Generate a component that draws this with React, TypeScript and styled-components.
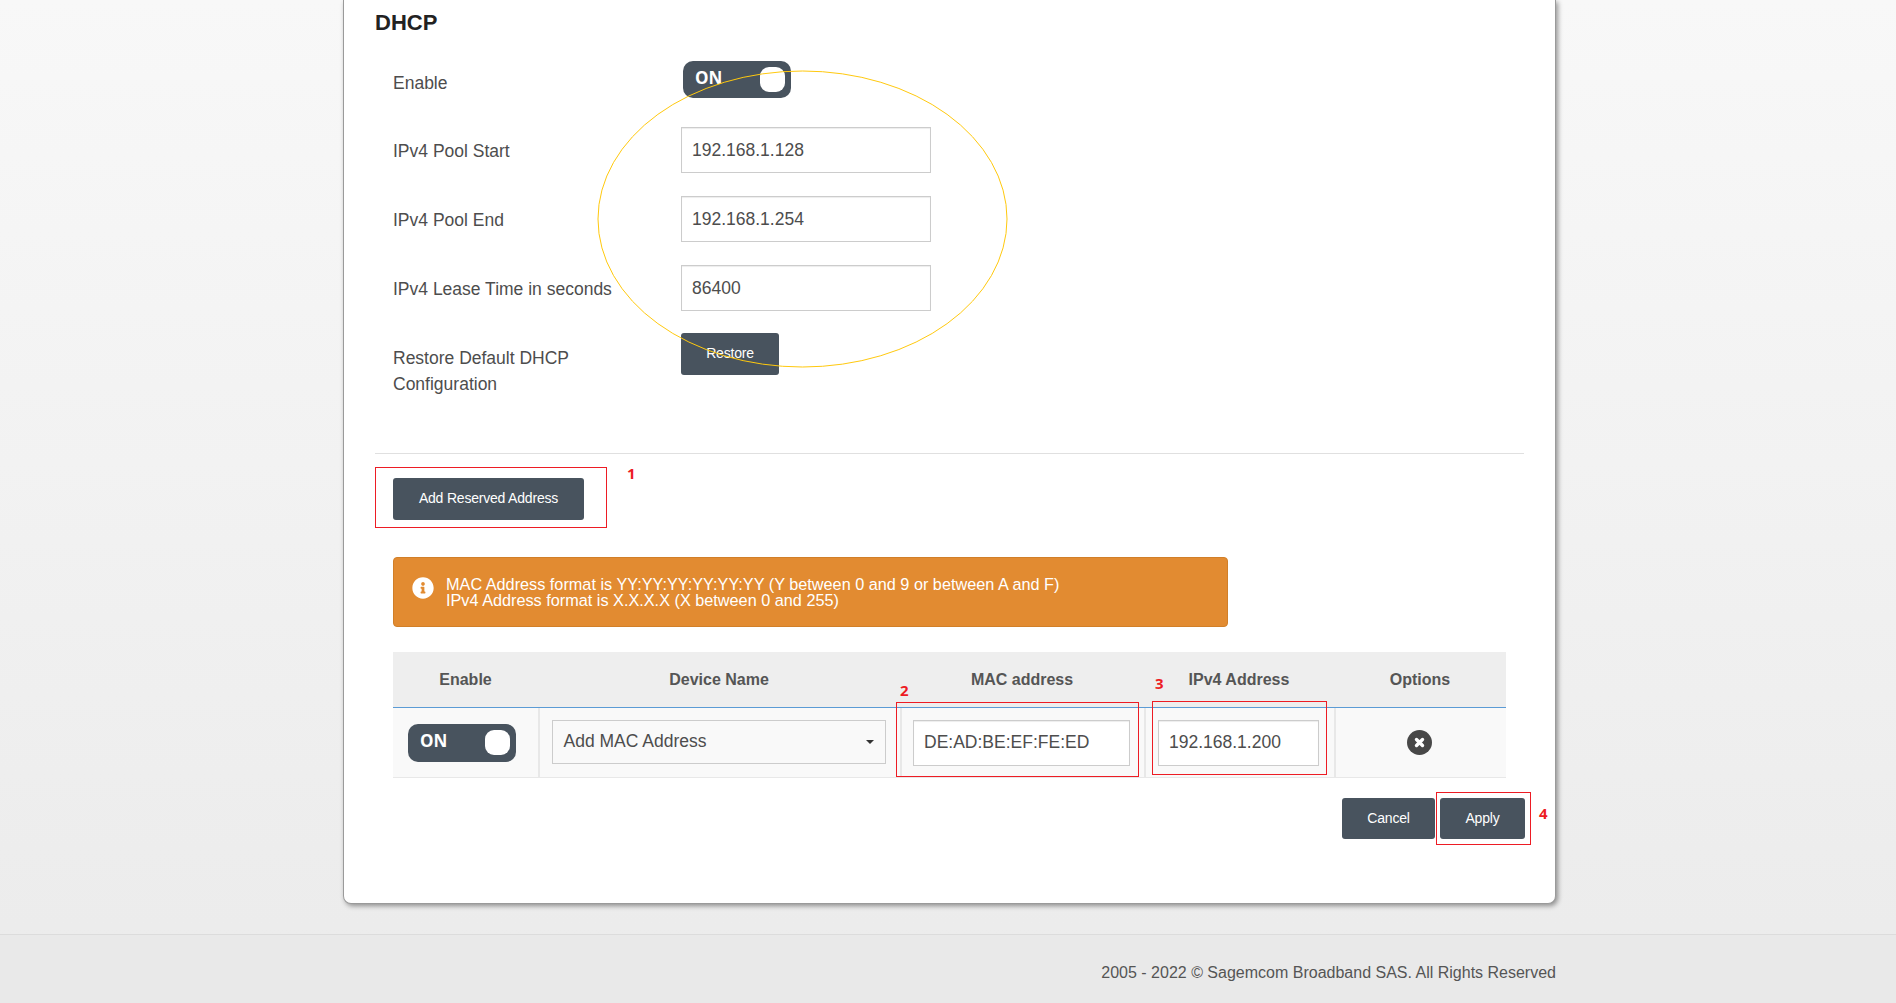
import styled, { createGlobalStyle } from "styled-components";
import { FaInfoCircle } from "react-icons/fa";

const GlobalStyle = createGlobalStyle`
  html, body {
    margin: 0;
    height: 100%;
    overflow: hidden;
  }
  body {
    font-family: "Liberation Sans", Arial, sans-serif;
    color: #4d4d4d;
  }
`;

const Page = styled.div`
  height: 1003px;
  display: flex;
  flex-direction: column;
  background: linear-gradient(to bottom, #f8f8f8 0%, #ebebeb 100%);
`;

const Main = styled.main`
  height: 934px;
  padding-left: 343px;
  box-sizing: border-box;
`;

const Card = styled.section`
  position: relative;
  width: 1213px;
  height: 904px;
  box-sizing: border-box;
  padding: 0 30px 0 31px;
  background: #fff;
  border: 1px solid #9a9a9a;
  border-top: 0;
  border-radius: 0 0 8px 8px;
  box-shadow: 2px 2px 5px rgba(0, 0, 0, 0.4);
`;

const Title = styled.h2`
  margin: 0;
  height: 61px;
  padding-top: 10px;
  box-sizing: border-box;
  font-size: 22px;
  line-height: 26px;
  font-weight: 700;
  color: #222;
`;

const FormRow = styled.div<{ $height: number }>`
  display: grid;
  grid-template-columns: 288px 1fr;
  align-items: start;
  height: ${p => p.$height}px;
  padding-left: 18px;
`;

const Label = styled.label<{ $top: number }>`
  font-size: 17.5px;
  line-height: 26px;
  padding-top: ${p => p.$top}px;
  color: #4d4d4d;
`;

const Toggle = styled.div`
  display: flex;
  align-items: center;
  justify-content: space-between;
  box-sizing: border-box;
  width: 108px;
  height: 37px;
  padding: 0 6px 0 12px;
  border-radius: 10px;
  background: #48535e;
  color: #fff;
  font-family: "Open Sans", sans-serif;
  font-size: 17px;
  font-weight: 700;
`;

const FormToggle = styled(Toggle)`
  margin-left: 2px;
`;

const RowToggle = styled(Toggle)`
  height: 38px;
  margin-right: 4px;
`;

const ToggleText = styled.span`
  position: relative;
  top: -2px;
`;

const Knob = styled.span`
  width: 25px;
  height: 25px;
  border-radius: 9px;
  background: #fff;
`;

const TextInput = styled.div<{ $width: number }>`
  display: flex;
  align-items: center;
  box-sizing: border-box;
  width: ${p => p.$width}px;
  height: 46px;
  padding: 0 10px;
  background: #fff;
  border: 1px solid #ccc;
  box-shadow: inset 0 1px 1px rgba(0, 0, 0, 0.075);
  font-size: 17.5px;
  color: #4d4d4d;
`;

const Button = styled.button<{ $width: number }>`
  width: ${p => p.$width}px;
  height: 42px;
  padding: 0 0 2px;
  border: 0;
  border-radius: 3px;
  background: #48535e;
  color: #fff;
  font-family: "Liberation Sans", Arial, sans-serif;
  font-size: 14px;
  letter-spacing: -0.2px;
`;

const ActionButton = styled(Button)`
  height: 41px;
`;

const Divider = styled.hr`
  margin: 0 1px 24px 0;
  border: 0;
  border-top: 1px solid #e0e0e0;
`;

const Indented = styled.div`
  padding-left: 18px;
`;

const Alert = styled.div`
  display: flex;
  align-items: center;
  gap: 12px;
  box-sizing: border-box;
  width: 835px;
  height: 70px;
  margin-top: 37px;
  padding: 0 18px;
  background: #e28b31;
  border: 1px solid #d17f28;
  border-radius: 4px;
  color: #fff;
  font-size: 16.25px;
  line-height: 16px;
`;

const AlertIcon = styled(FaInfoCircle)`
  flex: none;
  width: 22px;
  height: 22px;
  margin-bottom: 8px;
`;

const Table = styled.table`
  width: 1113px;
  margin-top: 25px;
  border-collapse: separate;
  border-spacing: 0;
  table-layout: fixed;
`;

const HeadCell = styled.th<{ $width: number }>`
  width: ${p => p.$width}px;
  height: 55px;
  padding: 0;
  background: #eee;
  border-bottom: 1px solid #5b9bd5;
  font-size: 16px;
  font-weight: 700;
  color: #555;
  text-align: center;
`;

const BodyCell = styled.td`
  height: 69px;
  padding: 0;
  background: #f9f9f9;
  border-bottom: 1px solid #e8e8e8;
  border-left: 2px solid #e8e8e8;
  vertical-align: middle;
  &:first-child {
    border-left: 0;
  }
`;

const CellInner = styled.div`
  display: flex;
  justify-content: center;
  align-items: center;
  padding-right: 3px;
`;

const SelectBox = styled.div`
  display: flex;
  align-items: center;
  justify-content: space-between;
  box-sizing: border-box;
  width: 334px;
  height: 44px;
  margin-bottom: 2px;
  padding: 0 11px;
  background: #f9f9f9;
  border: 1px solid #ccc;
  font-size: 17.5px;
  color: #4d4d4d;
`;

const Caret = styled.span`
  width: 0;
  height: 0;
  border-left: 4px solid transparent;
  border-right: 4px solid transparent;
  border-top: 4px solid #333;
`;

const RemoveIcon = styled.svg`
  width: 25px;
  height: 25px;
`;

const Actions = styled.div`
  display: flex;
  justify-content: flex-end;
  gap: 5px;
  margin-top: 20px;
`;

const Frame = styled.div<{ $x: number; $y: number; $w: number; $h: number }>`
  position: absolute;
  left: ${p => p.$x}px;
  top: ${p => p.$y}px;
  width: ${p => p.$w}px;
  height: ${p => p.$h}px;
  box-sizing: border-box;
  border: 1px solid #ed1c24;
  pointer-events: none;
`;

const Mark = styled.span<{ $x: number; $y: number }>`
  position: absolute;
  left: ${p => p.$x}px;
  top: ${p => p.$y}px;
  font-family: "Noto Sans", sans-serif;
  font-size: 15px;
  line-height: 16px;
  font-weight: 700;
  color: #ed1c24;
`;

const Ellipse = styled.svg`
  position: absolute;
  left: 253px;
  top: 70px;
  pointer-events: none;
`;

const Footer = styled.footer`
  flex: 1;
  display: flex;
  justify-content: flex-end;
  align-items: center;
  padding: 7px 340px 0 0;
  background: #e9e9e9;
  border-top: 1px solid #dcdcdc;
  font-size: 16px;
  color: #555;
`;

const poolRows = [
  { label: "IPv4 Pool Start", value: "192.168.1.128", height: 69 },
  { label: "IPv4 Pool End", value: "192.168.1.254", height: 69 },
  { label: "IPv4 Lease Time in seconds", value: "86400", height: 68 }
];

export default function App() {
  return (
    <Page>
      <GlobalStyle />
      <Main>
        <Card>
          <Title>DHCP</Title>
          <FormRow $height={66}>
            <Label $top={9}>Enable</Label>
            <FormToggle>
              <ToggleText>ON</ToggleText>
              <Knob />
            </FormToggle>
          </FormRow>
          {poolRows.map(row => (
            <FormRow $height={row.height} key={row.label}>
              <Label $top={11}>{row.label}</Label>
              <TextInput $width={250}>{row.value}</TextInput>
            </FormRow>
          ))}
          <FormRow $height={120}>
            <Label $top={12}>
              Restore Default DHCP
              <br />
              Configuration
            </Label>
            <Button $width={98}>Restore</Button>
          </FormRow>
          <Divider />
          <Indented>
            <Button $width={191}>Add Reserved Address</Button>
            <Alert>
              <AlertIcon />
              <div>
                MAC Address format is YY:YY:YY:YY:YY:YY (Y between 0 and 9 or between A and F)
                <br />
                IPv4 Address format is X.X.X.X (X between 0 and 255)
              </div>
            </Alert>
            <Table>
              <thead>
                <tr>
                  <HeadCell $width={145}>Enable</HeadCell>
                  <HeadCell $width={362}>Device Name</HeadCell>
                  <HeadCell $width={244}>MAC address</HeadCell>
                  <HeadCell $width={190}>IPv4 Address</HeadCell>
                  <HeadCell $width={172}>Options</HeadCell>
                </tr>
              </thead>
              <tbody>
                <tr>
                  <BodyCell>
                    <CellInner>
                      <RowToggle>
                        <ToggleText>ON</ToggleText>
                        <Knob />
                      </RowToggle>
                    </CellInner>
                  </BodyCell>
                  <BodyCell>
                    <CellInner>
                      <SelectBox>
                        Add MAC Address
                        <Caret />
                      </SelectBox>
                    </CellInner>
                  </BodyCell>
                  <BodyCell>
                    <CellInner>
                      <TextInput $width={217}>DE:AD:BE:EF:FE:ED</TextInput>
                    </CellInner>
                  </BodyCell>
                  <BodyCell>
                    <CellInner>
                      <TextInput $width={161}>192.168.1.200</TextInput>
                    </CellInner>
                  </BodyCell>
                  <BodyCell>
                    <CellInner>
                      <RemoveIcon viewBox="0 0 25 25">
                        <circle cx="12.5" cy="12.5" r="12.5" fill="#484848" />
                        <path d="M9.5 9.5l6 6M15.5 9.5l-6 6" stroke="#fff" strokeWidth="3.4" strokeLinecap="round" />
                      </RemoveIcon>
                    </CellInner>
                  </BodyCell>
                </tr>
              </tbody>
            </Table>
            <Actions>
              <ActionButton $width={93}>Cancel</ActionButton>
              <ActionButton $width={85}>Apply</ActionButton>
            </Actions>
          </Indented>

          <Ellipse width="411" height="298" viewBox="0 0 411 298">
            <ellipse cx="205.5" cy="149" rx="204.5" ry="148" fill="none" stroke="#ffc90e" strokeWidth="1" />
          </Ellipse>
          <Frame $x={31} $y={467} $w={232} $h={61} />
          <Mark $x={283} $y={465}>1</Mark>
          <Frame $x={552} $y={702} $w={243} $h={75} />
          <Mark $x={556} $y={682}>2</Mark>
          <Frame $x={808} $y={701} $w={175} $h={74} />
          <Mark $x={811} $y={675}>3</Mark>
          <Frame $x={1092} $y={792} $w={95} $h={53} />
          <Mark $x={1195} $y={805}>4</Mark>
        </Card>
      </Main>
      <Footer>2005 - 2022 © Sagemcom Broadband SAS. All Rights Reserved</Footer>
    </Page>
  );
}
